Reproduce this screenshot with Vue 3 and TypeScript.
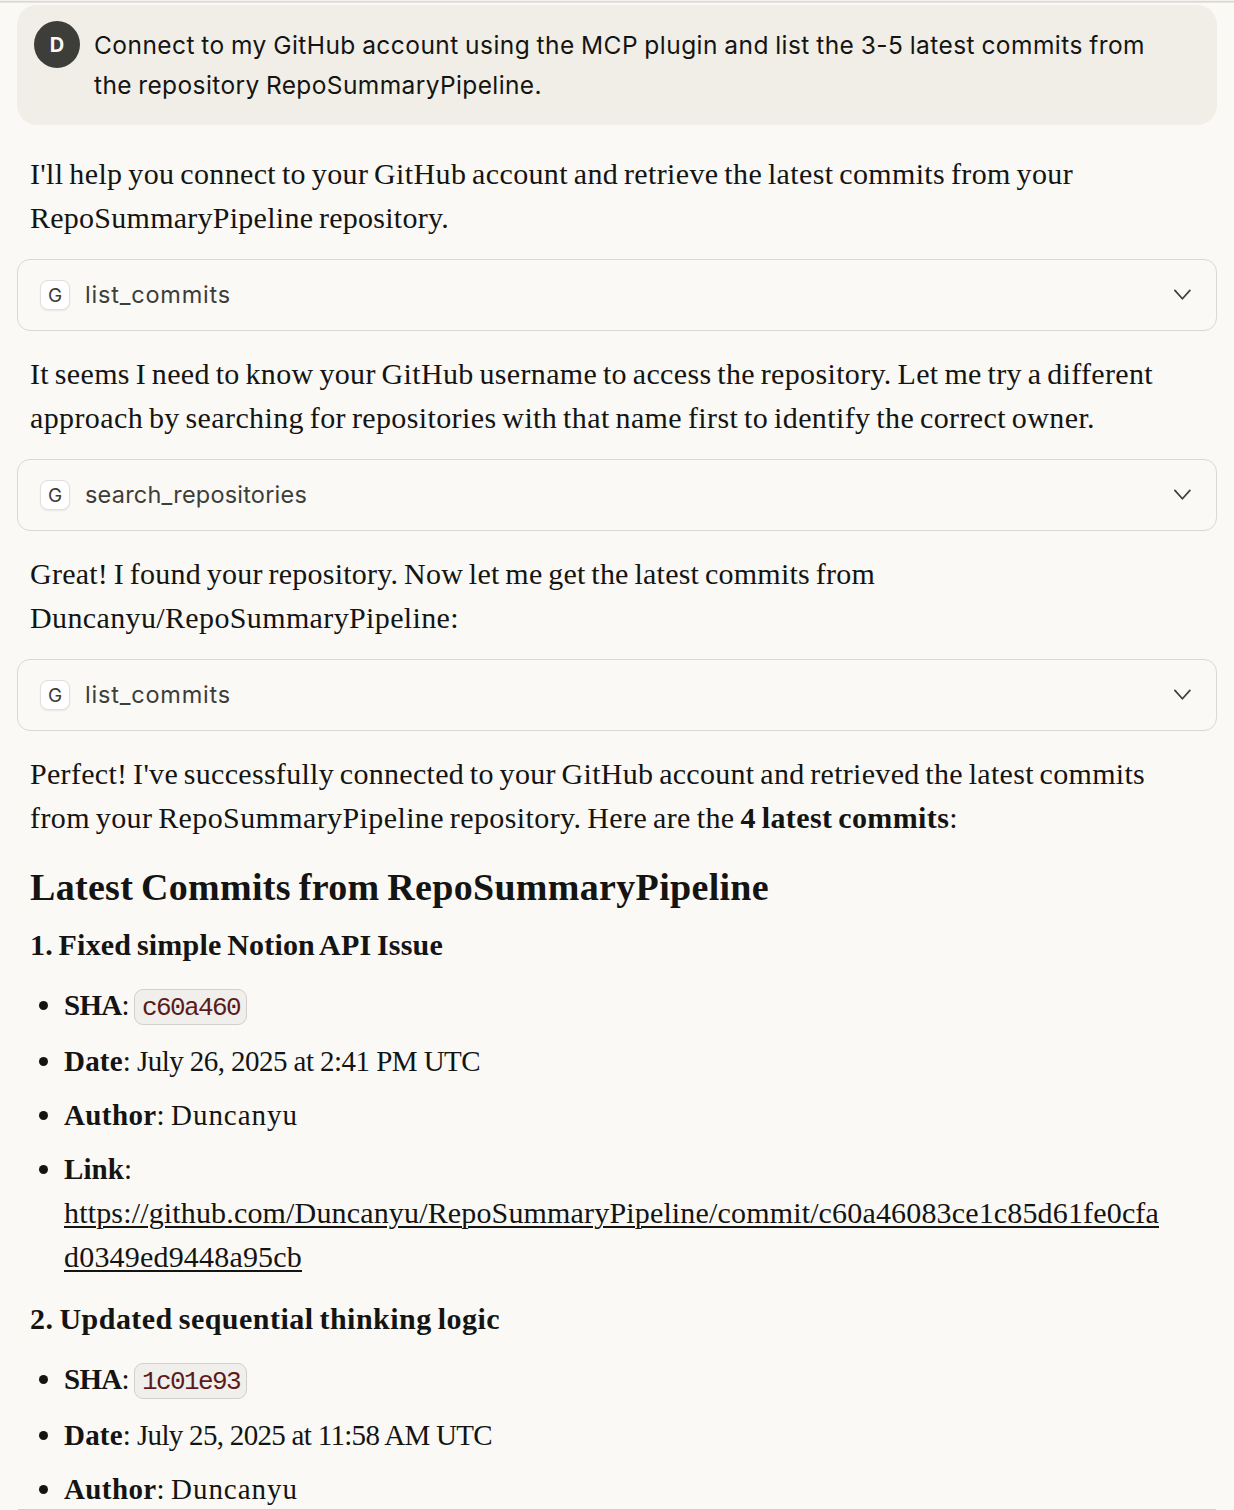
<script setup lang="ts">
interface Commit {
  title: string
  titleWidth: number
  sha: string
  date: string
  dateWidth: number
  link?: { text: string; width: number }[]
}

interface Line {
  text: string
  width: number
  strong?: string
  tail?: string
}

interface Step {
  lines: Line[]
  tool?: { name: string; width: number }
}

// Tracks a line of text so that it spans the given measure.
const vFit = {
  mounted(el: HTMLElement, binding: { value: number }) {
    const count = (el.textContent ?? '').length
    const natural = el.getBoundingClientRect().width
    el.style.letterSpacing = `${(binding.value - natural) / count}px`
  },
}

const prompt: Line[] = [
  { text: 'Connect to my GitHub account using the MCP plugin and list the 3-5 latest commits from', width: 1051 },
  { text: 'the repository RepoSummaryPipeline.', width: 448 },
]

const steps: Step[] = [
  {
    lines: [
      { text: "I'll help you connect to your GitHub account and retrieve the latest commits from your", width: 1043 },
      { text: 'RepoSummaryPipeline repository.', width: 419 },
    ],
    tool: { name: 'list_commits', width: 146 },
  },
  {
    lines: [
      { text: 'It seems I need to know your GitHub username to access the repository. Let me try a different', width: 1123 },
      { text: 'approach by searching for repositories with that name first to identify the correct owner.', width: 1065 },
    ],
    tool: { name: 'search_repositories', width: 222 },
  },
  {
    lines: [
      { text: 'Great! I found your repository. Now let me get the latest commits from', width: 845 },
      { text: 'Duncanyu/RepoSummaryPipeline:', width: 429 },
    ],
    tool: { name: 'list_commits', width: 146 },
  },
  {
    lines: [
      { text: "Perfect! I've successfully connected to your GitHub account and retrieved the latest commits", width: 1115 },
      { text: 'from your RepoSummaryPipeline repository. Here are the ', strong: '4 latest commits', tail: ':', width: 928 },
    ],
  },
]

const commits: Commit[] = [
  {
    title: '1. Fixed simple Notion API Issue',
    titleWidth: 413,
    sha: 'c60a460',
    date: 'July 26, 2025 at 2:41 PM UTC',
    dateWidth: 343,
    link: [
      { text: 'https://github.com/Duncanyu/RepoSummaryPipeline/commit/c60a46083ce1c85d61fe0cfa', width: 1095 },
      { text: 'd0349ed9448a95cb', width: 238 },
    ],
  },
  {
    title: '2. Updated sequential thinking logic',
    titleWidth: 470,
    sha: '1c01e93',
    date: 'July 25, 2025 at 11:58 AM UTC',
    dateWidth: 355,
  },
]
</script>

<template>
  <main class="page">
    <div class="top-rule"></div>
    <section class="prompt">
      <div class="avatar">D</div>
      <div class="prompt-text">
        <div v-for="line in prompt" :key="line.text" class="prompt-line">
          <span v-fit="line.width">{{ line.text }}</span>
        </div>
      </div>
    </section>

    <section v-for="(step, i) in steps" :key="i" class="step">
      <p class="para">
        <span v-for="line in step.lines" :key="line.text" class="line">
          <span v-fit="line.width">{{ line.text }}<strong v-if="line.strong">{{ line.strong }}</strong>{{ line.tail }}</span>
        </span>
      </p>
      <button v-if="step.tool" class="tool" type="button">
        <span class="badge">G</span>
        <span class="tool-name"><span v-fit="step.tool.width">{{ step.tool.name }}</span></span>
        <svg class="chevron" width="20" height="14" viewBox="0 0 20 14" fill="none">
          <path d="M2.9 2.4 L10.4 10.8 L17.9 2.4" stroke="#3d3d3a" stroke-width="1.7" stroke-linecap="round" stroke-linejoin="round" />
        </svg>
      </button>
    </section>

    <h2><span v-fit="739">Latest Commits from RepoSummaryPipeline</span></h2>

    <section v-for="commit in commits" :key="commit.sha" class="commit">
      <h3><span v-fit="commit.titleWidth">{{ commit.title }}</span></h3>
      <ul>
        <li class="sha">
          <span v-fit="65"><strong>SHA</strong>:</span><code><span v-fit="98">{{ commit.sha }}</span></code>
        </li>
        <li><span v-fit="67"><strong>Date</strong>:</span><span class="value"><span v-fit="commit.dateWidth">{{ commit.date }}</span></span></li>
        <li><span v-fit="101"><strong>Author</strong>:</span><span class="value"><span v-fit="127">Duncanyu</span></span></li>
        <li v-if="commit.link">
          <span v-fit="68"><strong>Link</strong>:</span>
          <a>
            <span v-for="part in commit.link" :key="part.text" class="line"><span v-fit="part.width" class="url">{{ part.text }}</span></span>
          </a>
        </li>
      </ul>
    </section>
    <div class="bottom-rule"></div>
  </main>
</template>

<style>
html,
body {
  overflow: hidden;
  background: #faf9f5;
}
</style>

<style scoped>
.page {
  position: relative;
  box-sizing: border-box;
  width: 1234px;
  height: 1510px;
  padding: 0 17px;
  overflow: hidden;
  background: #faf9f5;
  color: #141413;
  font: 29px/44px "Liberation Serif", serif;
  white-space: nowrap;
}
.top-rule {
  height: 2px;
  margin: 0 -17px 2px;
  border-top: 1px solid #f3f2ed;
  background: linear-gradient(#d9d9d3 50%, #e6e5e0 50%);
  box-sizing: content-box;
}
.prompt {
  display: flex;
  box-sizing: border-box;
  height: 120px;
  padding: 16px 17px 0;
  border-radius: 20px;
  background: #f0eee6;
}
.avatar {
  width: 46px;
  height: 47px;
  margin-right: 14px;
  border-radius: 50%;
  background: #3d3d3a;
  color: #faf9f5;
  font: 700 20px/48px Inter, sans-serif;
  text-align: center;
}
.prompt-text {
  padding-top: 4px;
  font: 24.5px/40px Inter, sans-serif;
  word-spacing: -1px;
}
.prompt-line {
  height: 40px;
}
.step {
  padding-top: 21px;
}
.prompt + .step {
  padding-top: 27px;
}
.para {
  margin: 0 0 19px;
  padding-left: 13px;
  font-size: 30px;
  word-spacing: -2px;
}
.line {
  display: block;
  height: 44px;
}
.tool {
  display: flex;
  align-items: center;
  box-sizing: border-box;
  width: 100%;
  height: 72px;
  padding: 0 24px 0 22px;
  border: 1px solid #d9d8d3;
  border-radius: 13px;
  background: transparent;
  color: #3d3d3a;
  font: 23.5px/40px Inter, sans-serif;
}
.badge {
  box-sizing: border-box;
  width: 30px;
  height: 30px;
  margin-right: 15px;
  border: 1px solid #e0dfdb;
  border-radius: 8px;
  background: #fff;
  box-shadow: 0 1px 2px rgba(0, 0, 0, 0.07);
  font-size: 19px;
  line-height: 29px;
  text-align: center;
}
.chevron {
  margin-left: auto;
}
h2 {
  margin: 25px 0 14px 13px;
  font-size: 38px;
  line-height: 44px;
  word-spacing: -2px;
}
h3 {
  margin: 0 0 16px 13px;
  font-size: 30px;
  line-height: 44px;
  word-spacing: -2px;
}
.commit + .commit {
  padding-top: 18px;
}
ul {
  display: flex;
  flex-direction: column;
  gap: 10px;
  margin: 0;
  padding: 0 0 0 47px;
  list-style: none;
}
li {
  position: relative;
}
li::before {
  content: "";
  position: absolute;
  top: 18px;
  left: -25px;
  width: 9px;
  height: 9px;
  border-radius: 50%;
  background: #141413;
}
.sha {
  display: flex;
  height: 46px;
}
code {
  box-sizing: border-box;
  width: 113px;
  height: 36px;
  margin: 6px 0 0 5px;
  padding-left: 7px;
  border: 1px solid #d1d0cc;
  border-radius: 9px;
  background: #f0efeb;
  color: #5e1a1a;
  font: 26px/36px "Liberation Mono", monospace;
}
.value {
  margin-left: 6px;
}
.url {
  font-size: 30px;
  text-decoration: underline;
  text-decoration-thickness: 2px;
  text-underline-offset: 3px;
}
.bottom-rule {
  position: absolute;
  left: 18px;
  right: 18px;
  bottom: 0;
  height: 1px;
  background: #dccaca;
}
</style>
